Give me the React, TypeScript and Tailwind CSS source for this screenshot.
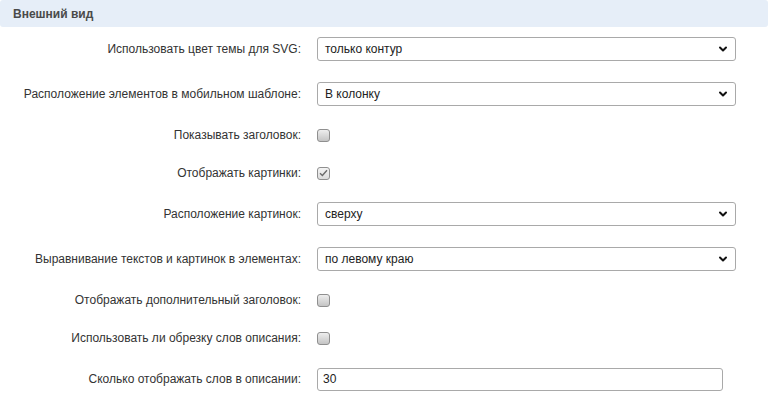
import { ChevronDown } from "lucide-react";

type Row =
  | { kind: "select"; label: string; value: string }
  | { kind: "check"; label: string; checked: boolean }
  | { kind: "input"; label: string; value: string };

const rows: Row[] = [
  { kind: "select", label: "Использовать цвет темы для SVG:", value: "только контур" },
  { kind: "select", label: "Расположение элементов в мобильном шаблоне:", value: "В колонку" },
  { kind: "check", label: "Показывать заголовок:", checked: false },
  { kind: "check", label: "Отображать картинки:", checked: true },
  { kind: "select", label: "Расположение картинок:", value: "сверху" },
  { kind: "select", label: "Выравнивание текстов и картинок в элементах:", value: "по левому краю" },
  { kind: "check", label: "Отображать дополнительный заголовок:", checked: false },
  { kind: "check", label: "Использовать ли обрезку слов описания:", checked: false },
  { kind: "input", label: "Сколько отображать слов в описании:", value: "30" },
];

function Checkbox({ checked }: { checked: boolean }) {
  return (
    <span
      className={
        "flex h-[13px] w-[13px] items-center justify-center rounded-[3px] border border-[#8f8f8f] " +
        (checked
          ? "bg-gradient-to-b from-[#f4f4f4] to-[#dcdcdc]"
          : "bg-gradient-to-b from-[#eeeeee] to-[#c4c4c4]")
      }
    >
      {checked && (
        <svg width="9" height="8" viewBox="0 0 9 8" fill="none">
          <path d="M1 4.2 L3.4 6.5 L8 1.3" stroke="#6b6b6b" strokeWidth="1.4" />
        </svg>
      )}
    </span>
  );
}

export default function App() {
  return (
    <div className="h-[397px] w-[768px] overflow-hidden bg-white font-['Liberation_Sans',Arial,sans-serif] text-[12px] text-[#333]">
      <div className="flex h-[27px] items-center rounded-[3px] bg-[#e6eef8] pl-[13px] font-bold text-[#4a4a4a]">
        Внешний вид
      </div>

      {rows.map((row) => (
        <div
          key={row.label}
          className={
            "flex items-center " + (row.kind === "check" ? "h-[38px]" : "h-[44.5px]")
          }
        >
          <div className="w-[301px] shrink-0 text-right">{row.label}</div>
          <div className="ml-[16px] flex items-center">
            {row.kind === "select" && (
              <div className="flex h-[24px] w-[419px] items-center justify-between rounded-[3px] border border-[#a9a9a9] bg-white pl-[7px] pr-[6px] text-[#222]">
                <span>{row.value}</span>
                <ChevronDown className="h-[12px] w-[12px] text-[#111]" strokeWidth={4} />
              </div>
            )}
            {row.kind === "check" && <Checkbox checked={row.checked} />}
            {row.kind === "input" && (
              <div className="flex h-[23px] w-[406px] items-center rounded-[3px] border border-[#a9a9a9] bg-white pl-[5px] text-[#222]">
                {row.value}
              </div>
            )}
          </div>
        </div>
      ))}
    </div>
  );
}
